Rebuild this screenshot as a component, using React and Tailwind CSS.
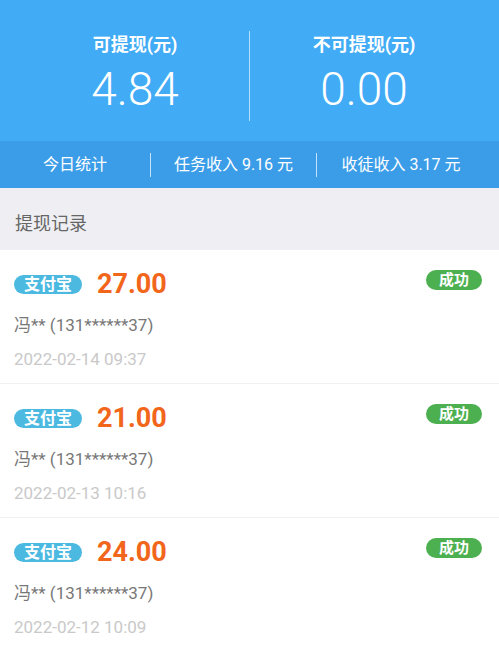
import React from "react";

const registros = [
  { monto: "27.00", nombre: "冯** (131******37)", fecha: "2022-02-14 09:37" },
  { monto: "21.00", nombre: "冯** (131******37)", fecha: "2022-02-13 10:16" },
  { monto: "24.00", nombre: "冯** (131******37)", fecha: "2022-02-12 10:09" },
];

const fuente = { fontFamily: 'Roboto, "Noto Sans CJK SC", sans-serif' };

function App() {
  return (
    <div className="min-h-screen w-full bg-white" style={fuente}>
      {/* SALDO */}
      <div className="bg-[#41abf6] px-[21px] pt-[31px] pb-[20px] text-white">
        <div className="flex h-[90px] items-start">
          <div className="flex flex-1 flex-col items-center pt-[5px]">
            <div className="text-[18px] font-bold leading-none">可提现(元)</div>
            <div className="mt-[12px] text-[46px] font-light leading-none">4.84</div>
          </div>
          <div className="h-[90px] w-px bg-white/60"></div>
          <div className="flex flex-1 flex-col items-center pt-[5px]">
            <div className="text-[18px] font-bold leading-none">不可提现(元)</div>
            <div className="mt-[12px] text-[46px] font-light leading-none">0.00</div>
          </div>
        </div>
      </div>

      {/* ESTADISTICAS */}
      <div className="flex h-[47px] items-center bg-[#3b9de8] pr-[14px] text-[16px] text-white">
        <div className="flex w-[150px] justify-center">今日统计</div>
        <div className="h-[24px] w-px bg-white/70"></div>
        <div className="flex w-[165px] justify-center">任务收入 9.16 元</div>
        <div className="h-[24px] w-px bg-white/70"></div>
        <div className="flex flex-1 justify-center">收徒收入 3.17 元</div>
      </div>

      {/* TITULO */}
      <div className="h-[62px] bg-[#efeff3] pl-[15px] pt-[27px] text-[18px] leading-none text-[#666]">
        提现记录
      </div>

      {/* LISTA */}
      {registros.map((r, i) => (
        <div
          key={i}
          className="h-[134px] border-b border-[#f1f1f1] px-[14px] pt-[21px] pr-[17px]"
        >
          <div className="flex items-start justify-between">
            <div className="flex items-center gap-[15px]">
              <span className="flex h-[19px] items-center rounded-full bg-[#4cb9e1] px-[10px] text-[16px] font-bold leading-none text-white">
                支付宝
              </span>
              <span className="text-[27px] font-bold leading-none text-[#f2661b]">
                {r.monto}
              </span>
            </div>
            <span className="-mt-[1px] flex h-[20px] w-[56px] items-center justify-center rounded-full bg-[#4caf50] text-[15px] font-bold leading-none text-white">
              成功
            </span>
          </div>
          <div className="mt-[19px] text-[17px] leading-none text-[#777]">{r.nombre}</div>
          <div className="mt-[17px] text-[17px] leading-none text-[#c9c9c9]">{r.fecha}</div>
        </div>
      ))}
    </div>
  );
}

export default App;
